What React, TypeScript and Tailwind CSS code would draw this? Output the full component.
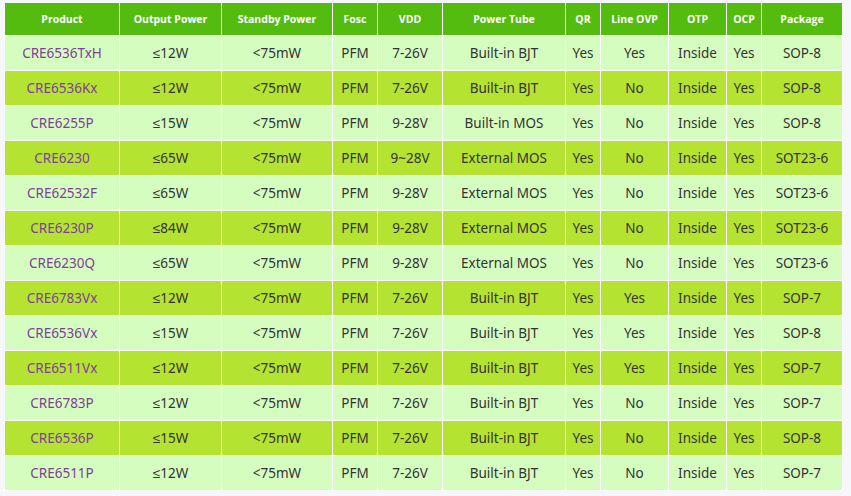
import React from "react"

const headers = ["Product", "Output Power", "Standby Power", "Fosc", "VDD", "Power Tube", "QR", "Line OVP", "OTP", "OCP", "Package"]
const widths = ["w-[115px]", "w-[102px]", "w-[111px]", "w-[45px]", "w-[65px]", "w-[123px]", "w-[35px]", "w-[68px]", "w-[58px]", "w-[35px]", "w-[81px]"]

const rows = [
    ["CRE6536TxH", "≤12W", "<75mW", "PFM", "7-26V", "Built-in BJT", "Yes", "Yes", "Inside", "Yes", "SOP-8"],
    ["CRE6536Kx", "≤12W", "<75mW", "PFM", "7-26V", "Built-in BJT", "Yes", "No", "Inside", "Yes", "SOP-8"],
    ["CRE6255P", "≤15W", "<75mW", "PFM", "9-28V", "Built-in MOS", "Yes", "No", "Inside", "Yes", "SOP-8"],
    ["CRE6230", "≤65W", "<75mW", "PFM", "9~28V", "External MOS", "Yes", "No", "Inside", "Yes", "SOT23-6"],
    ["CRE62532F", "≤65W", "<75mW", "PFM", "9-28V", "External MOS", "Yes", "No", "Inside", "Yes", "SOT23-6"],
    ["CRE6230P", "≤84W", "<75mW", "PFM", "9-28V", "External MOS", "Yes", "No", "Inside", "Yes", "SOT23-6"],
    ["CRE6230Q", "≤65W", "<75mW", "PFM", "9-28V", "External MOS", "Yes", "No", "Inside", "Yes", "SOT23-6"],
    ["CRE6783Vx", "≤12W", "<75mW", "PFM", "7-26V", "Built-in BJT", "Yes", "Yes", "Inside", "Yes", "SOP-7"],
    ["CRE6536Vx", "≤15W", "<75mW", "PFM", "7-26V", "Built-in BJT", "Yes", "Yes", "Inside", "Yes", "SOP-8"],
    ["CRE6511Vx", "≤12W", "<75mW", "PFM", "7-26V", "Built-in BJT", "Yes", "Yes", "Inside", "Yes", "SOP-7"],
    ["CRE6783P", "≤12W", "<75mW", "PFM", "7-26V", "Built-in BJT", "Yes", "No", "Inside", "Yes", "SOP-7"],
    ["CRE6536P", "≤15W", "<75mW", "PFM", "7-26V", "Built-in BJT", "Yes", "No", "Inside", "Yes", "SOP-8"],
    ["CRE6511P", "≤12W", "<75mW", "PFM", "7-26V", "Built-in BJT", "Yes", "No", "Inside", "Yes", "SOP-7"],
]

export default function App() {
    return (
        <div className="min-h-[496px] w-[851px] bg-[#f5f7fa] pl-[4px] pt-[3px] font-['Noto_Sans',sans-serif]">
            <table className="w-[839px] table-fixed border-collapse text-center">
                <colgroup>
                    {widths.map((w, i) => (
                        <col key={i} className={w} />
                    ))}
                </colgroup>
                <thead>
                    <tr className="h-[32px] bg-[#53bc0e]">
                        {headers.map((h, i) => (
                            <th key={i} className="border border-white border-t-0 p-0 pt-[2px] text-[10.5px] font-bold text-white font-['Open_Sans',sans-serif]">
                                {h}
                            </th>
                        ))}
                    </tr>
                </thead>
                <tbody>
                    {rows.map((row, r) => (
                        <tr key={r} className={`h-[35px] ${r % 2 === 0 ? "bg-[#d6fdc0]" : "bg-[#b5e332]"}`}>
                            {row.map((cell, c) => (
                                <td
                                    key={c}
                                    className={`border border-white p-0 pt-[2px] text-[13.5px] leading-none ${c === 0 ? "text-[#7e3f99]" : "text-[#333333]"}`}
                                >
                                    {cell}
                                </td>
                            ))}
                        </tr>
                    ))}
                </tbody>
            </table>
        </div>
    )
}
